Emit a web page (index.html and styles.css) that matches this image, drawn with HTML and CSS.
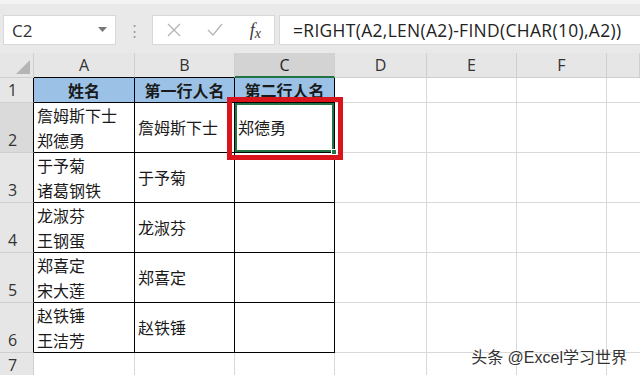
FILE: index.html
```
<!DOCTYPE html>
<html lang="zh-CN">
<head>
  <meta charset="UTF-8">
  <title>Excel</title>
  <link rel="stylesheet" href="styles.css">
</head>
<body>
  <div class="toolbar">
    <div class="namebox">
      <span>C2</span>
      <svg class="caret" width="9" height="6" viewBox="0 0 9 6"><path d="M0 0h9L4.5 5z" fill="#777"/></svg>
    </div>
    <div class="grip">⋮</div>
    <div class="fnbox">
      <svg width="14" height="14" viewBox="0 0 14 14"><path d="M1 1l12 12M13 1L1 13" stroke="#b4b4b4" stroke-width="1.3" fill="none"/></svg>
      <svg width="16" height="14" viewBox="0 0 16 14"><path d="M1 7l5 5 9-11" stroke="#b4b4b4" stroke-width="1.3" fill="none"/></svg>
      <span class="fx">f<span class="x">x</span></span>
    </div>
    <div class="formula">=RIGHT(A2,LEN(A2)-FIND(CHAR(10),A2))</div>
  </div>

  <div class="sheet">
    <div class="grid">
      <div class="corner"><span class="tri"></span></div>
      <div class="colhead edge">A</div>
      <div class="colhead edge">B</div>
      <div class="colhead sel">C</div>
      <div class="colhead">D</div>
      <div class="colhead">E</div>
      <div class="colhead">F</div>
      <div class="colhead last"></div>

      <div class="rowhead in">1</div>
      <div class="cell t head">姓名</div>
      <div class="cell t head">第一行人名</div>
      <div class="cell t head">第二行人名</div>
      <div class="cell"></div><div class="cell"></div><div class="cell"></div><div class="cell last"></div>

      <div class="rowhead in sel">2</div>
      <div class="cell t two">詹姆斯下士<br>郑德勇</div>
      <div class="cell t">詹姆斯下士</div>
      <div class="cell t active">郑德勇<span class="handle"></span></div>
      <div class="cell"></div><div class="cell"></div><div class="cell"></div><div class="cell last"></div>

      <div class="rowhead in">3</div>
      <div class="cell t two">于予菊<br>诸葛钢铁</div>
      <div class="cell t">于予菊</div>
      <div class="cell t"></div>
      <div class="cell"></div><div class="cell"></div><div class="cell"></div><div class="cell last"></div>

      <div class="rowhead in">4</div>
      <div class="cell t two">龙淑芬<br>王钢蛋</div>
      <div class="cell t">龙淑芬</div>
      <div class="cell t"></div>
      <div class="cell"></div><div class="cell"></div><div class="cell"></div><div class="cell last"></div>

      <div class="rowhead in">5</div>
      <div class="cell t two">郑喜定<br>宋大莲</div>
      <div class="cell t">郑喜定</div>
      <div class="cell t"></div>
      <div class="cell"></div><div class="cell"></div><div class="cell"></div><div class="cell last"></div>

      <div class="rowhead in">6</div>
      <div class="cell t two">赵铁锤<br>王洁芳</div>
      <div class="cell t">赵铁锤</div>
      <div class="cell t"></div>
      <div class="cell"></div><div class="cell"></div><div class="cell"></div><div class="cell last"></div>

      <div class="rowhead">7</div>
      <div class="cell"></div><div class="cell"></div><div class="cell"></div>
      <div class="cell"></div><div class="cell"></div><div class="cell"></div><div class="cell last"></div>
    </div>

    <div class="mark"></div>
    <div class="watermark">头条 @Excel学习世界</div>
  </div>
</body>
</html>
```

FILE: styles.css
```
* {
  box-sizing: border-box;
}
body {
  margin: 0;
  width: 640px;
  height: 375px;
  overflow: hidden;
  background: #fff;
  font-family: "Open Sans", "Noto Sans CJK SC", sans-serif;
  color: #222;
}

/* formula bar */
.toolbar {
  height: 53px;
  background: #e9e9e9;
  border-top: 4px solid #f3f3f3;
  display: grid;
  grid-template-columns: 113px 36px 123px 1fr;
  align-items: start;
  padding: 11px 0 0 3px;
}
.namebox {
  height: 30px;
  background: #fff;
  border: 1px solid #d8d8d8;
  display: flex;
  align-items: center;
  justify-content: space-between;
  padding: 0 8px 0 8px;
  font-size: 17px;
  color: #333;
}
.grip {
  text-align: center;
  color: #9a9a9a;
  font-size: 15px;
  line-height: 30px;
}
.fnbox {
  height: 30px;
  background: #fff;
  border: 1px solid #d8d8d8;
  display: flex;
  align-items: center;
  justify-content: space-between;
  padding: 0 13px 0 14px;
}
.fx {
  font-family: "Liberation Serif", serif;
  font-style: italic;
  font-size: 18px;
  color: #3a3a3a;
  line-height: 1;
}
.fx .x {
  font-size: 14px;
  position: relative;
  top: 2px;
}
.formula {
  min-width: 0;
  overflow: hidden;
  margin-left: 4px;
  height: 30px;
  background: #fff;
  border: 1px solid #d8d8d8;
  border-right: none;
  padding-left: 13px;
  font-size: 17.4px;
  letter-spacing: 0.35px;
  line-height: 28px;
  color: #222;
  white-space: nowrap;
}

/* sheet */
.sheet {
  position: relative;
}
.grid {
  display: grid;
  grid-template-columns: 34px 101px 100px 100px 92px 90px 90px 1fr;
  grid-template-rows: 25px 25px 50px 50px 50px 50px 50px 25px;
}
.corner, .colhead, .rowhead {
  background: #e6e6e6;
  border-right: 1px solid #cfcfcf;
  border-bottom: 1px solid #cfcfcf;
  color: #333;
  font-size: 16px;
}
.corner {
  position: relative;
}
.tri {
  position: absolute;
  right: 3px;
  bottom: 3px;
  width: 0;
  height: 0;
  border-left: 14px solid transparent;
  border-bottom: 14px solid #b5b5b5;
}
.colhead {
  display: flex;
  align-items: center;
  justify-content: center;
  line-height: 1;
}
.colhead.edge {
  border-bottom-color: #000;
}
.colhead.sel {
  background: #d3d3d3;
  color: #1f1f1f;
  border-bottom: 2px solid #217346;
}
.rowhead {
  display: flex;
  align-items: flex-end;
  padding: 0 0 1px 8px;
  line-height: 22px;
}
.rowhead.in {
  border-right-color: #000;
}
.rowhead.sel {
  background: #dadada;
}
.cell {
  border-right: 1px solid #d9d9d9;
  border-bottom: 1px solid #d9d9d9;
  font-family: "Noto Sans CJK SC", sans-serif;
  font-size: 16px;
  color: #1a1a1a;
  display: flex;
  align-items: center;
  padding-left: 3px;
  line-height: 25px;
}
.cell.last {
  border-right: none;
}
.cell.t {
  border-right-color: #000;
  border-bottom-color: #000;
}
.cell.head {
  background: #9bc2e6;
  justify-content: center;
  font-weight: bold;
  padding-left: 0;
}
.cell.two {
  display: block;
}
.cell.active {
  position: relative;
  box-shadow: inset 0 0 0 2px #217346;
}
.handle {
  position: absolute;
  right: -3px;
  bottom: -3px;
  width: 6px;
  height: 6px;
  background: #217346;
  border: 1px solid #fff;
}

/* annotation */
.mark {
  position: absolute;
  left: 227px;
  top: 44px;
  width: 116px;
  height: 63px;
  border: 5px solid #d9141c;
}
.watermark {
  position: absolute;
  right: 13px;
  top: 291px;
  font-family: "Liberation Sans", "Noto Sans CJK SC", sans-serif;
  font-size: 16px;
  color: #333;
  text-shadow: 0 0 2px #fff, 0 0 2px #fff, 0 0 1px #fff;
}
```
